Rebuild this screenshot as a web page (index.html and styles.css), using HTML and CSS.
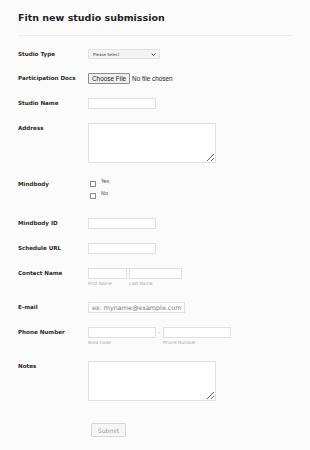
FILE: index.html
```html
<!DOCTYPE html>
<html lang="en">

<head>
    <meta charset="UTF-8">
    <meta name="viewport" content="width=device-width, initial-scale=1.0">
    <title>Fitn new studio submission</title>
    <link rel="stylesheet" href="styles.css">
</head>

<body>
    <form class="form">
        <div class="form-header">
            <h1>Fitn new studio submission</h1>
        </div>

        <ul class="form-list">
            <li class="row">
                <label class="row-label" for="studio-type">Studio Type</label>
                <div class="row-field">
                    <div class="select-wrap">
                        <select id="studio-type" class="select">
                            <option>Please Select</option>
                            <option>Gym</option>
                            <option>Yoga</option>
                            <option>Pilates</option>
                        </select>
                        <svg class="chevron" viewBox="0 0 8 5" width="5" height="3">
                            <path d="M1 1 L4 4 L7 1" fill="none" stroke="#444" stroke-width="1.6" />
                        </svg>
                    </div>
                </div>
            </li>

            <li class="row">
                <label class="row-label">Participation Docs</label>
                <div class="row-field">
                    <div class="file">
                        <span class="file-btn">Choose File</span>
                        <span class="file-name">No file chosen</span>
                    </div>
                </div>
            </li>

            <li class="row">
                <label class="row-label" for="studio-name">Studio Name</label>
                <div class="row-field">
                    <input id="studio-name" class="input input-md" type="text">
                </div>
            </li>

            <li class="row">
                <label class="row-label" for="address">Address</label>
                <div class="row-field">
                    <textarea id="address" class="textarea"></textarea>
                </div>
            </li>

            <li class="row row-check">
                <label class="row-label">Mindbody</label>
                <div class="row-field checks">
                    <label class="check"><input type="checkbox" class="box"><span>Yes</span></label>
                    <label class="check"><input type="checkbox" class="box"><span>No</span></label>
                </div>
            </li>

            <li class="row">
                <label class="row-label" for="mb-id">Mindbody ID</label>
                <div class="row-field">
                    <input id="mb-id" class="input input-md" type="text">
                </div>
            </li>

            <li class="row">
                <label class="row-label" for="schedule">Schedule URL</label>
                <div class="row-field">
                    <input id="schedule" class="input input-md" type="text">
                </div>
            </li>

            <li class="row">
                <label class="row-label">Contact Name</label>
                <div class="row-field split">
                    <span class="sub">
                        <input class="input input-first" type="text">
                        <span class="sublabel">First Name</span>
                    </span>
                    <span class="sub">
                        <input class="input input-last" type="text">
                        <span class="sublabel">Last Name</span>
                    </span>
                </div>
            </li>

            <li class="row">
                <label class="row-label" for="email">E-mail</label>
                <div class="row-field">
                    <input id="email" class="input input-email" type="email" placeholder="ex: myname@example.com">
                </div>
            </li>

            <li class="row">
                <label class="row-label">Phone Number</label>
                <div class="row-field split">
                    <span class="sub">
                        <input class="input input-md" type="tel">
                        <span class="sublabel">Area Code</span>
                    </span>
                    <span class="dash">-</span>
                    <span class="sub">
                        <input class="input input-md" type="tel">
                        <span class="sublabel">Phone Number</span>
                    </span>
                </div>
            </li>

            <li class="row">
                <label class="row-label" for="notes">Notes</label>
                <div class="row-field">
                    <textarea id="notes" class="textarea"></textarea>
                </div>
            </li>

            <li class="row row-submit">
                <div></div>
                <div class="row-field">
                    <button type="button" class="submit">Submit</button>
                </div>
            </li>
        </ul>
    </form>
</body>

</html>
```

FILE: styles.css
```css
body {
    margin: 0;
    background: #fbfbfb;
    font-family: "DejaVu Sans", Verdana, sans-serif;
    color: #2b2b2b;
}

.form {
    padding: 0 18px;
}

.form-header {
    padding-top: 10px;
    padding-bottom: 10px;
    border-bottom: 1px solid #ededed;
}

.form-header h1 {
    margin: 0;
    font-size: 9.5px;
    line-height: 15px;
    font-weight: bold;
    color: #222;
}

.form-list {
    list-style: none;
    margin: 0;
    padding: 6px 0 0;
}

.row {
    display: grid;
    grid-template-columns: 70px 1fr;
    padding: 7px 0;
}

.row-label {
    font-size: 5.6px;
    font-weight: bold;
    line-height: 10px;
    color: #2b2b2b;
}

.row-field {
    display: flex;
    align-items: flex-start;
}

/* select */
.select-wrap {
    position: relative;
    width: 72px;
    height: 10px;
}

.select {
    appearance: none;
    -webkit-appearance: none;
    display: block;
    box-sizing: border-box;
    width: 100%;
    height: 100%;
    margin: 0;
    padding: 0 0 0 4px;
    border: 1px solid #e2e2e2;
    border-radius: 1px;
    background: #f3f3f3;
    font-family: "DejaVu Sans", sans-serif;
    font-size: 4px;
    color: #444;
}

.chevron {
    position: absolute;
    right: 4px;
    top: 3.5px;
}

/* file */
.file {
    display: flex;
    align-items: center;
    height: 11px;
    font-family: "Liberation Sans", Arial, sans-serif;
    font-size: 6.4px;
    color: #222;
}

.file-btn {
    box-sizing: border-box;
    height: 11px;
    line-height: 9px;
    padding: 0 3px;
    border: 1px solid #8f8f8f;
    border-radius: 1px;
    background: #efefef;
}

.file-name {
    margin-left: 2px;
}

/* text inputs */
.input {
    box-sizing: border-box;
    height: 11px;
    margin: 0;
    padding: 0 3px;
    border: 1px solid #e0e0e0;
    background: #fff;
    font-family: "DejaVu Sans", sans-serif;
    font-size: 6.4px;
    color: #333;
}

.input::placeholder {
    color: #7a7a7a;
}

.input-md {
    width: 68px;
}

.input-first {
    width: 39px;
}

.input-last {
    width: 53px;
}

.input-email {
    width: 97px;
}

.textarea {
    box-sizing: border-box;
    width: 128px;
    height: 40px;
    margin: 0;
    border: 1px solid #e0e0e0;
    background: #fff;
    font-size: 6px;
}

/* checkboxes */
.row-check .row-label {
    padding-top: 2px;
}

.checks {
    flex-direction: column;
    padding-bottom: 3px;
}

.check {
    display: flex;
    align-items: flex-start;
    height: 12px;
    padding-left: 2px;
    font-size: 5.2px;
    color: #444;
}

.box {
    appearance: none;
    -webkit-appearance: none;
    box-sizing: border-box;
    width: 6px;
    height: 6px;
    margin: 4px 5px 0 0;
    border: 1px solid #8c8c8c;
    background: #fff;
}

.check span {
    line-height: 8px;
}

/* split fields */
.split {
    gap: 2px;
}

.sub {
    display: flex;
    flex-direction: column;
}

.sublabel {
    margin-top: 1px;
    font-size: 4.4px;
    line-height: 8px;
    color: #a8a8a8;
}

.dash {
    width: 3px;
    text-align: center;
    font-size: 5px;
    line-height: 11px;
    color: #999;
}

/* submit */
.row-submit {
    padding-top: 15px;
}

.submit {
    box-sizing: border-box;
    width: 35px;
    height: 14px;
    margin: 0 0 0 3px;
    padding: 0;
    border: 1px solid #d6d6d6;
    border-radius: 1px;
    background: #f6f6f6;
    font-family: "DejaVu Sans", sans-serif;
    font-size: 6px;
    color: #9a9a9a;
}
```
